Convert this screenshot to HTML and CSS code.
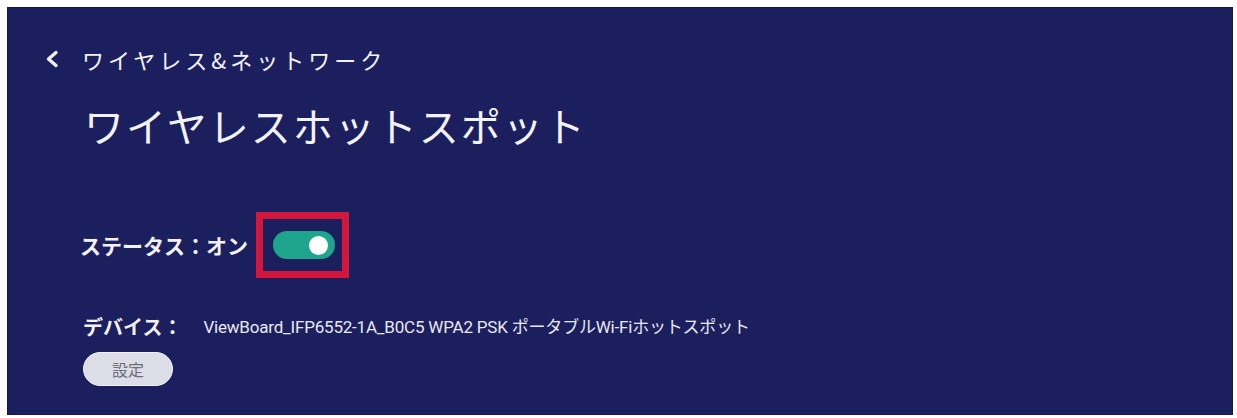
FILE: index.html
```html
<!DOCTYPE html>
<html lang="ja">
<head>
<meta charset="utf-8">
<link rel="stylesheet" href="styles.css">
</head>
<body>
<div class="panel">
  <div class="back-row">
    <svg class="back-icon" viewBox="0 0 14 18" width="14" height="18"><path d="M11 2.5 L3.5 9 L11 15.5" fill="none" stroke="#f2f2f8" stroke-width="3.4" stroke-linecap="round" stroke-linejoin="round"/></svg>
    <span class="back-text">ワイヤレス&amp;ネットワーク</span>
  </div>
  <h1 class="title">ワイヤレスホットスポット</h1>
  <div class="status-row">
    <span class="label status-label">ステータス：オン</span>
    <span class="highlight">
      <span class="toggle"><span class="knob"></span></span>
    </span>
  </div>
  <div class="device-row">
    <span class="label">デバイス：</span>
    <span class="device-value">ViewBoard_IFP6552-1A_B0C5 WPA2 PSK ポータブルWi-Fiホットスポット</span>
  </div>
  <button class="settings-btn">設定</button>
</div>
</body>
</html>
```

FILE: styles.css
```css
html, body {
  margin: 0;
  background: #ffffff;
}
body {
  padding: 7px 4px 3px 7px;
  font-family: "Noto Sans CJK JP", "Noto Sans", sans-serif;
}
.panel {
  box-sizing: border-box;
  width: 1226px;
  height: 408px;
  background: #1c1f5e;
  color: #f2f2f8;
  padding: 37px 0 0 0;
  display: flex;
  flex-direction: column;
  align-items: flex-start;
  box-shadow: inset 0 0 0 1px #15184a;
}
.back-row {
  display: flex;
  align-items: center;
  height: 30px;
  padding-left: 38px;
}
.back-icon {
  display: block;
  margin-right: 23px;
}
.back-text {
  font-size: 22px;
  line-height: 30px;
  letter-spacing: 4px;
  font-weight: 400;
}
.title {
  margin: 25px 0 0 77px;
  font-size: 40px;
  line-height: 52px;
  font-weight: 400;
  letter-spacing: 2px;
}
.status-row {
  display: flex;
  align-items: center;
  margin: 61px 0 0 73px;
}
.label {
  font-size: 20px;
  line-height: 28px;
  font-weight: 700;
}
.status-label {
  font-size: 21px;
}
.highlight {
  display: inline-flex;
  align-items: center;
  margin-left: 8px;
  border: 7px solid #d2163c;
  padding: 12px 7px 12px 10px;
}
.toggle {
  display: flex;
  align-items: center;
  justify-content: flex-end;
  box-sizing: border-box;
  width: 62px;
  height: 28px;
  border-radius: 14px;
  background: #1fa58e;
  padding-right: 7px;
}
.knob {
  width: 19px;
  height: 19px;
  border-radius: 50%;
  background: #ffffff;
}
.device-row {
  display: flex;
  align-items: center;
  margin: 35px 0 0 76px;
}
.device-value {
  margin-left: 21px;
  font-family: "Roboto", "Noto Sans CJK JP", sans-serif;
  font-size: 17px;
  line-height: 24px;
  letter-spacing: -0.2px;
  color: #e8e8f2;
}
.settings-btn {
  margin: 11px 0 0 76px;
  width: 90px;
  height: 34px;
  border: 1px solid #f0f0f6;
  border-radius: 17px;
  background: #dcdde6;
  color: #6e6e78;
  font-family: "Noto Sans CJK JP", sans-serif;
  font-size: 16px;
  padding: 0;
}
```
